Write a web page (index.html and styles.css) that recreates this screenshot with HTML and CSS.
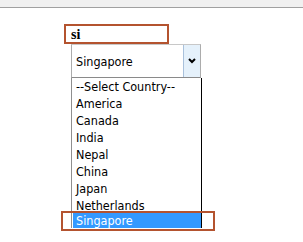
FILE: index.html
```html
<!DOCTYPE html>
<html>
<head>
<meta charset="utf-8">
<link rel="stylesheet" href="styles.css">
</head>
<body>
<div class="topbar"></div>
<div class="content">
  <div class="search">si</div>
  <div class="select">
    <span class="select-text">Singapore</span>
    <span class="select-btn">
      <svg width="8" height="6" viewBox="0 0 8 6"><polyline points="1,1 4,4 7,1" fill="none" stroke="#000" stroke-width="2"/></svg>
    </span>
  </div>
  <div class="list">
    <div class="item">--Select Country--</div>
    <div class="item">America</div>
    <div class="item">Canada</div>
    <div class="item">India</div>
    <div class="item">Nepal</div>
    <div class="item">China</div>
    <div class="item">Japan</div>
    <div class="item">Netherlands</div>
    <div class="item selected">Singapore</div>
    <div class="mark"></div>
  </div>
</div>
</body>
</html>
```
FILE: styles.css
```css
html, body { margin: 0; padding: 0; background: #fff; }
body { width: 303px; height: 242px; overflow: hidden; font-family: "DejaVu Sans Condensed", "DejaVu Sans", sans-serif; }
.topbar { height: 7px; background: #f0f0f0; border-bottom: 1px solid #a0a0a0; }
.content { padding-top: 16px; position: relative; }
.search {
  margin-left: 64px; width: 101px; height: 16px;
  border: 2px solid #b4532f;
  font-family: "Liberation Serif", serif; font-weight: bold; font-size: 14px;
  line-height: 17px; padding-left: 5px; box-sizing: content-box; width: 96px;
}
.select {
  margin-left: 71px; width: 128px; height: 32px;
  border: 1px solid #acacac; border-bottom-color: #8a8a8a; border-top-color: #c8c8c8;
  display: flex; align-items: center; justify-content: space-between;
  font-size: 12.5px; color: #000;
}
.select-text { padding-left: 4px; }
.select-btn {
  width: 16px; height: 32px; background: #e5f1fb; border-left: 1px solid #a9c1dc;
  display: flex; align-items: center; justify-content: center;
}
.list {
  margin-left: 71px; width: 129px;
  border-left: 1px solid #8f8f8f; border-right: 1px solid #000;
  font-size: 12.5px; position: relative;
}
.item { height: 17px; line-height: 17px; padding-left: 4px; color: #000; white-space: nowrap; }
.item.selected { background: #3399ff; color: #fff; margin-left: 1px; height: 15px; line-height: 15px; padding-left: 3px; margin-top: -1px; }
.mark {
  position: absolute; left: -11px; top: 133px; width: 150px; height: 16px;
  border: 2px solid #b4532f;
}
```
